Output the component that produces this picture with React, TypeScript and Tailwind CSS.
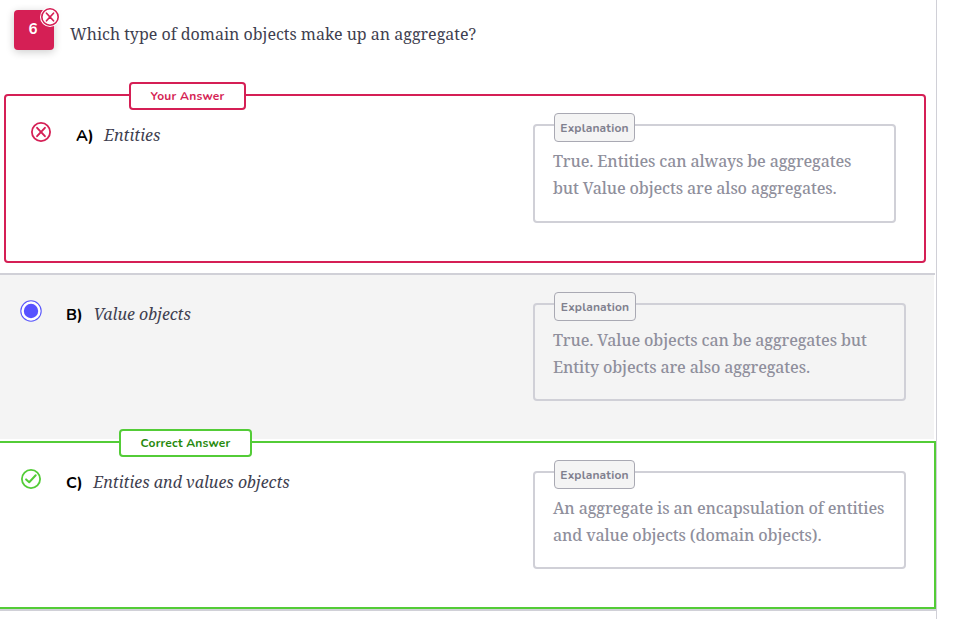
import type { ReactNode } from "react";

const SERIF = "font-['Noto_Serif','Droid_Serif','DejaVu_Serif_Condensed','DejaVu_Serif',serif]";
const SANS = "font-['Nunito','Nunito_Sans','Lato',sans-serif]";

function CrossIcon({ className }: { className: string }) {
  return (
    <svg viewBox="0 0 20 20" fill="none" stroke="#d51f55" className={className}>
      <circle cx="10" cy="10" r="9.1" fill="#fff" strokeWidth="1.8" />
      <path d="M6.1 5.8 13.9 14.2M13.9 5.8 6.1 14.2" strokeWidth="1.9" strokeLinecap="round" />
    </svg>
  );
}

function CheckIcon() {
  return (
    <svg viewBox="0 0 20 20" fill="none" stroke="#53cc37" className="size-5">
      <circle cx="10" cy="10" r="9.1" strokeWidth="1.8" />
      <path d="M5.1 10.4 8.2 13.2 14.7 6.3" strokeWidth="2" strokeLinecap="round" strokeLinejoin="round" />
    </svg>
  );
}

function RadioIcon() {
  return (
    <svg viewBox="0 0 22 22" className="size-[22px]">
      <circle cx="11" cy="11" r="10.2" fill="#fff" stroke="#5956fb" strokeWidth="1.1" />
      <circle cx="11" cy="11" r="7.2" fill="#5752ff" />
    </svg>
  );
}

function Explanation({ tagClass, children }: { tagClass: string; children: ReactNode }) {
  return (
    <div className="relative flex-1 rounded border-2 border-[#d0d0d7] pt-[22px] pl-[18px]">
      <div
        className={`absolute -top-[13px] left-[19px] flex h-[29px] items-center justify-center rounded border border-[#a9a9b3] bg-[#f4f4f4] text-[12px] font-[660] text-[#80808e] ${SANS} ${tagClass}`}
      >
        <span className="tracking-[0.15px]">Explanation</span>
      </div>
      <div
        className={`text-[16px] leading-[27px] font-medium tracking-[-0.125px] whitespace-nowrap text-[#8f8f9c] ${SERIF}`}
      >
        {children}
      </div>
    </div>
  );
}

function Answer({ letter, letterClass, text }: { letter: string; letterClass: string; text: ReactNode }) {
  return (
    <div className="flex h-6 items-center whitespace-nowrap">
      <span className={`pt-0.5 text-[16px] font-bold text-black ${SANS} ${letterClass}`}>{letter})</span>
      <span className={`text-[16px] text-[#3f3f50] italic ${SERIF}`}>{text}</span>
    </div>
  );
}

export default function App() {
  return (
    <div className="h-[619px] w-[960px] overflow-hidden bg-white">
      <main className="flex h-full w-[937px] flex-col border-r border-[#d0d0d7]">
        <header className="flex h-[94px] shrink-0 items-start pt-[10px] pl-[14px]">
          <div
            className={`relative flex size-10 items-center justify-center rounded bg-[#d51f55] text-[15px] font-bold text-white shadow-[0_2px_8px_rgba(0,0,0,0.2)] ${SANS}`}
          >
            <span className="-ml-0.5 pb-0.5">6</span>
            <div className="absolute -top-[3px] -right-[6px] size-5 rounded-full bg-white p-px">
              <CrossIcon className="size-[18px]" />
            </div>
          </div>
          <h1 className={`ml-4 pt-[11px] text-[16px] leading-[26px] whitespace-nowrap text-[#3f3f50] ${SERIF}`}>
            <span>Which type of domain objects make up an aggregate?</span>
          </h1>
        </header>

        <section className="h-[181px] w-[935px] shrink-0 border-b-2 border-[#d0d0d7] pl-1">
          <div className="relative flex h-[169px] w-[922px] items-start rounded border-2 border-[#d51f55] pr-7">
            <div
              className={`absolute -top-[14px] left-[123px] flex h-7 w-[117px] items-center justify-center rounded border-2 border-[#d51f55] bg-white text-[12px] font-[660] text-[#d51f55] ${SANS}`}
            >
              <span className="tracking-[0.25px]">Your Answer</span>
            </div>
            <div className="w-[70px] pt-[26px] pl-[25px]">
              <CrossIcon className="size-5" />
            </div>
            <div className="w-[457px] pt-[27px]">
              <Answer letter="A" letterClass="w-7" text={<span>Entities</span>} />
            </div>
            <div className="mt-7 flex h-[99px] flex-1">
              <Explanation tagClass="w-[81px]">
                <div>True. Entities can always be aggregates</div>
                <div>but Value objects are also aggregates.</div>
              </Explanation>
            </div>
          </div>
        </section>

        <section className="flex h-[164px] w-[934px] shrink-0 items-start bg-[#f4f4f4] pr-7">
          <div className="w-[66px] pt-[25px] pl-5">
            <RadioIcon />
          </div>
          <div className="w-[467px] pt-[27px]">
            <Answer letter="B" letterClass="w-[27.5px]" text={<span>Value objects</span>} />
          </div>
          <div className="mt-7 flex h-[98px] flex-1">
            <Explanation tagClass="w-[82px]">
              <div>True. Value objects can be aggregates but</div>
              <div>Entity objects are also aggregates.</div>
            </Explanation>
          </div>
        </section>

        <section className="mt-0.5 h-[170px] w-[936px] shrink-0 border-b-2 border-[#d0d0d7]">
          <div className="relative flex h-[168px] items-start border-y-2 border-r-2 border-[#53cc37] pr-7">
            <div
              className={`absolute -top-[14px] left-[119px] flex h-7 w-[133px] items-center justify-center rounded border-2 border-[#53cc37] bg-white text-[12px] font-[680] text-[#26890c] ${SANS}`}
            >
              <span className="tracking-[0.2px]">Correct Answer</span>
            </div>
            <div className="w-[66px] pt-[26px] pl-[21px]">
              <CheckIcon />
            </div>
            <div className="w-[467px] pt-[27px]">
              <Answer letter="C" letterClass="w-[27.3px]" text={<span>Entities and values objects</span>} />
            </div>
            <div className="mt-7 flex h-[98px] flex-1">
              <Explanation tagClass="w-[81px]">
                <div>An aggregate is an encapsulation of entities</div>
                <div>and value objects (domain objects).</div>
              </Explanation>
            </div>
          </div>
        </section>
      </main>
    </div>
  );
}
